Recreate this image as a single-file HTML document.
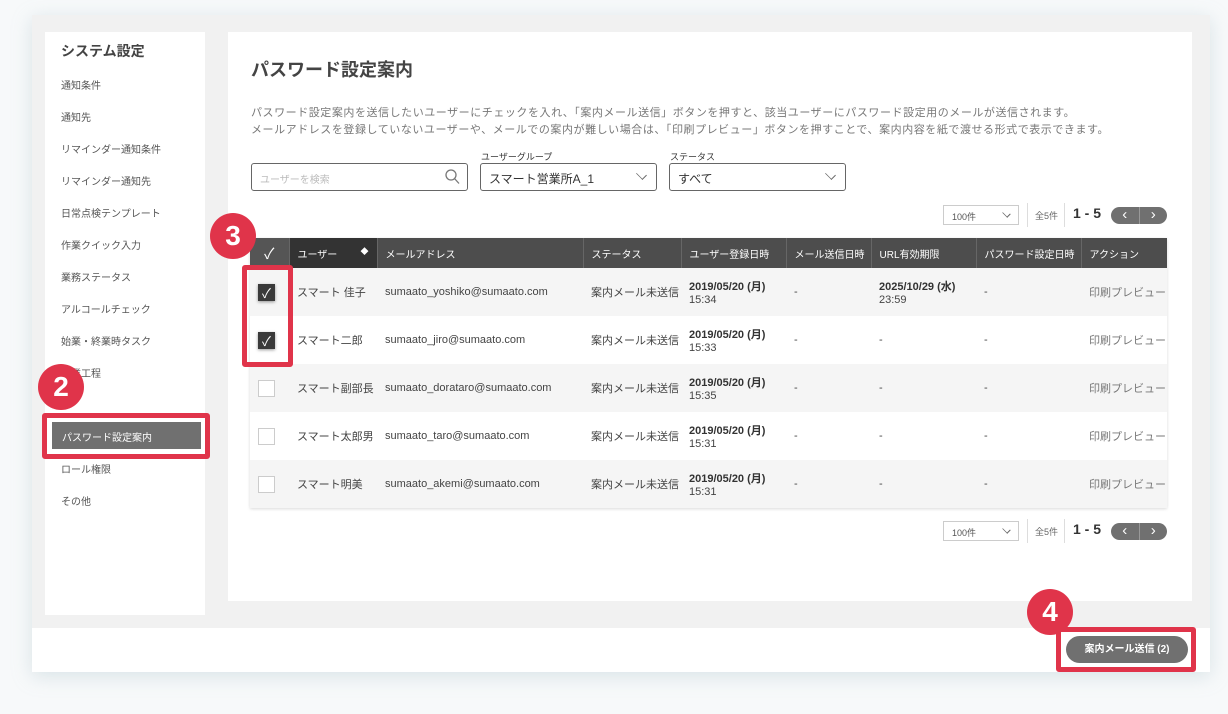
<!DOCTYPE html>
<html><head><meta charset="utf-8"><style>
*{box-sizing:border-box;margin:0;padding:0}
body{width:1228px;height:714px;background:#f7f9fa;font-family:"Liberation Sans","Noto Sans CJK JP",sans-serif;color:#333;position:relative;overflow:hidden}
.a{position:absolute}
.frame{left:32px;top:15px;width:1178px;height:657px;background:#f1f1f1;box-shadow:0 4px 18px rgba(160,185,195,.35)}
.side{left:45px;top:32px;width:160px;height:583px;background:#fff}
.side .t{position:absolute;left:16px;top:9px;font-size:14px;font-weight:bold;color:#444}
.side .i{position:absolute;left:16px;font-size:10px;color:#555}
.main{left:228px;top:32px;width:964px;height:569px;background:#fff}
.bar{left:32px;top:628px;width:1178px;height:44px;background:#fff}
.red{border:5px solid #e0344a;border-radius:3px}
.badge{width:46px;height:46px;border-radius:50%;background:#e0344a;color:#fff;font-size:28px;font-weight:bold;text-align:center;line-height:46px}
.inp{border:1.5px solid #666;border-radius:3px;height:28px;background:#fff;font-size:12px;padding:6px 8px;color:#333}
.chev{position:absolute;right:10px;top:6px;width:9px;height:9px;border-right:1.3px solid #666;border-bottom:1.3px solid #666;transform:rotate(45deg) scaleY(.7)}
table{border-collapse:collapse;position:absolute;left:250px;top:238px;width:917px;font-size:11px;box-shadow:0 1px 3px rgba(0,0,0,.15);table-layout:fixed}
th{background:#4d4d4d;color:#fff;font-weight:normal;font-size:10px;text-align:left;padding-left:8px;height:30px;border-right:1px solid #666;white-space:nowrap}
td{height:48px;padding-left:8px;color:#444;font-size:11px;white-space:nowrap;overflow:hidden}
tr.g td{background:#f5f5f5}
tr.w td{background:#fff}
.cb{width:17px;height:17px;border:1px solid #ccc;background:#fff;display:inline-block;vertical-align:middle}
.cb.on{background:#3a3a3a;border-color:#3a3a3a;box-shadow:0 1px 3px rgba(0,0,0,.4);color:#fff;text-align:center;font-size:13px;line-height:17px}
b{font-weight:bold;color:#333}
.sel{border:1px solid #ccc;width:76px;height:20px;background:#fff;font-size:9px;color:#555;padding:4px 8px}
.pill{width:56px;height:17px;border-radius:9px;background:#707070;color:#fff;font-size:15px;display:flex}
.pill span{flex:1;text-align:center;line-height:16px}
</style></head><body>
<div class="a frame"></div>
<div class="a side">
<div class="t">システム設定</div>
<div class="i" style="top:45px">通知条件</div>
<div class="i" style="top:77px">通知先</div>
<div class="i" style="top:109px">リマインダー通知条件</div>
<div class="i" style="top:141px">リマインダー通知先</div>
<div class="i" style="top:173px">日常点検テンプレート</div>
<div class="i" style="top:205px">作業クイック入力</div>
<div class="i" style="top:237px">業務ステータス</div>
<div class="i" style="top:269px">アルコールチェック</div>
<div class="i" style="top:301px">始業・終業時タスク</div>
<div class="i" style="top:333px">作業工程</div>
<div class="i" style="top:429px">ロール権限</div>
<div class="i" style="top:461px">その他</div>
</div>
<div class="a" style="left:52px;top:422px;width:149px;height:27px;background:#707070;color:#fff;font-size:10px;padding:7px 10px">パスワード設定案内</div>
<div class="a red" style="left:42px;top:413px;width:168px;height:46px"></div>
<div class="a badge" style="left:38px;top:364px">2</div>
<div class="a main"></div>
<div class="a" style="left:251px;top:56px;font-size:18px;font-weight:bold;color:#444">パスワード設定案内</div>
<div class="a" style="left:251px;top:105px;font-size:11px;letter-spacing:0.55px;color:#777;line-height:17px;white-space:nowrap">パスワード設定案内を送信したいユーザーにチェックを入れ、「案内メール送信」ボタンを押すと、該当ユーザーにパスワード設定用のメールが送信されます。<br>メールアドレスを登録していないユーザーや、メールでの案内が難しい場合は、「印刷プレビュー」ボタンを押すことで、案内内容を紙で渡せる形式で表示できます。</div>
<div class="a inp" style="left:251px;top:163px;width:217px;color:#bbb;font-size:10px;padding-top:7px">ユーザーを検索<svg style="position:absolute;right:7px;top:5px" width="15" height="16"><circle cx="6" cy="6" r="5" fill="none" stroke="#777" stroke-width="1.3"/><path d="M9.5 9.5L14 14.5" stroke="#777" stroke-width="1.3"/></svg></div>
<div class="a" style="left:481px;top:150px;font-size:9px">ユーザーグループ</div>
<div class="a inp" style="left:480px;top:163px;width:177px">スマート営業所A_1<span class="chev"></span></div>
<div class="a" style="left:670px;top:150px;font-size:9px">ステータス</div>
<div class="a inp" style="left:669px;top:163px;width:177px">すべて<span class="chev"></span></div>

<div class="a sel" style="left:943px;top:205px">100件<span class="chev" style="top:4px;right:8px;width:7px;height:7px"></span></div>
<div class="a" style="left:1027px;top:203px;width:1px;height:24px;background:#ddd"></div>
<div class="a" style="left:1035px;top:209px;font-size:9px;color:#666">全5件</div>
<div class="a" style="left:1064px;top:203px;width:1px;height:24px;background:#ddd"></div>
<div class="a" style="left:1073px;top:205px;font-size:14px;font-weight:bold">1 - 5</div>
<div class="a pill" style="left:1111px;top:207px"><span>‹</span><span style="border-left:1px solid #999">›</span></div>

<table>
<colgroup><col style="width:39px"><col style="width:88px"><col style="width:206px"><col style="width:98px"><col style="width:105px"><col style="width:85px"><col style="width:105px"><col style="width:105px"><col></colgroup>
<tr><th style="background:#555;text-align:center;padding:0;font-size:15px">✓</th><th style="background:#333">ユーザー<span style="float:right;margin-right:8px;font-size:8px">◆</span></th><th>メールアドレス</th><th>ステータス</th><th>ユーザー登録日時</th><th>メール送信日時</th><th>URL有効期限</th><th>パスワード設定日時</th><th style="border:0">アクション</th></tr>
<tr class="g"><td><span class="cb on">✓</span></td><td>スマート 佳子</td><td>sumaato_yoshiko@sumaato.com</td><td>案内メール未送信</td><td><b>2019/05/20 (月)</b><br>15:34</td><td>-</td><td><b>2025/10/29 (水)</b><br>23:59</td><td>-</td><td style="color:#777">印刷プレビュー</td></tr>
<tr class="w"><td><span class="cb on">✓</span></td><td>スマート二郎</td><td>sumaato_jiro@sumaato.com</td><td>案内メール未送信</td><td><b>2019/05/20 (月)</b><br>15:33</td><td>-</td><td>-</td><td>-</td><td style="color:#777">印刷プレビュー</td></tr>
<tr class="g"><td><span class="cb"></span></td><td>スマート副部長</td><td>sumaato_dorataro@sumaato.com</td><td>案内メール未送信</td><td><b>2019/05/20 (月)</b><br>15:35</td><td>-</td><td>-</td><td>-</td><td style="color:#777">印刷プレビュー</td></tr>
<tr class="w"><td><span class="cb"></span></td><td>スマート太郎男</td><td>sumaato_taro@sumaato.com</td><td>案内メール未送信</td><td><b>2019/05/20 (月)</b><br>15:31</td><td>-</td><td>-</td><td>-</td><td style="color:#777">印刷プレビュー</td></tr>
<tr class="g"><td><span class="cb"></span></td><td>スマート明美</td><td>sumaato_akemi@sumaato.com</td><td>案内メール未送信</td><td><b>2019/05/20 (月)</b><br>15:31</td><td>-</td><td>-</td><td>-</td><td style="color:#777">印刷プレビュー</td></tr>
</table>
<div class="a red" style="left:242px;top:265px;width:51px;height:102px"></div>
<div class="a badge" style="left:210px;top:213px">3</div>

<div class="a sel" style="left:943px;top:521px">100件<span class="chev" style="top:4px;right:8px;width:7px;height:7px"></span></div>
<div class="a" style="left:1027px;top:519px;width:1px;height:24px;background:#ddd"></div>
<div class="a" style="left:1035px;top:525px;font-size:9px;color:#666">全5件</div>
<div class="a" style="left:1064px;top:519px;width:1px;height:24px;background:#ddd"></div>
<div class="a" style="left:1073px;top:521px;font-size:14px;font-weight:bold">1 - 5</div>
<div class="a pill" style="left:1111px;top:523px"><span>‹</span><span style="border-left:1px solid #999">›</span></div>

<div class="a bar"></div>
<div class="a" style="left:1066px;top:636px;width:122px;height:27px;border-radius:14px;background:#707070;color:#fff;font-size:10px;font-weight:bold;text-align:center;line-height:27px">案内メール送信 (2)</div>
<div class="a red" style="left:1056px;top:627px;width:140px;height:45px"></div>
<div class="a badge" style="left:1027px;top:589px">4</div>
</body></html>
